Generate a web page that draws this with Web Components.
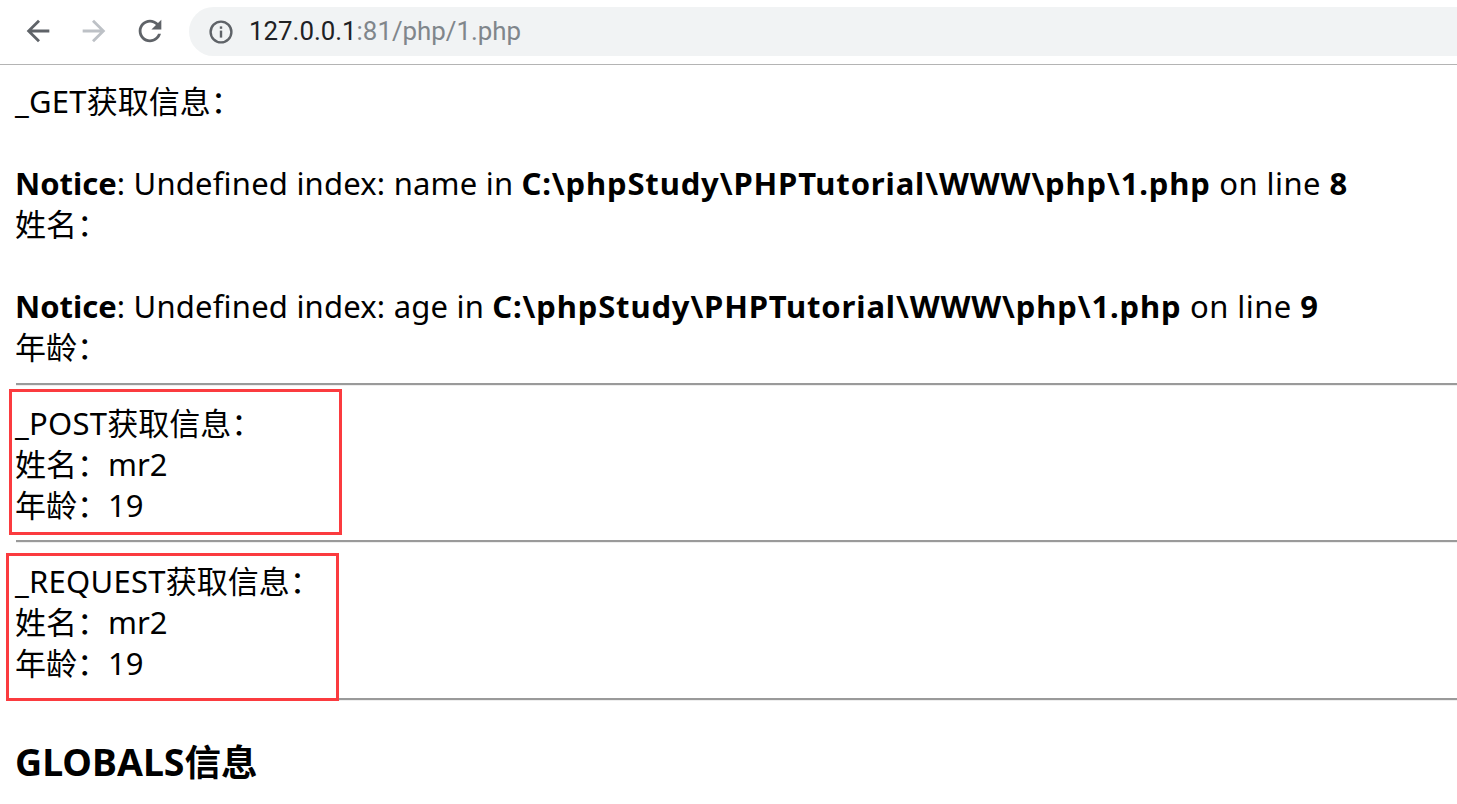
<!DOCTYPE html>
<html><head><meta charset="utf-8"><style>html,body{margin:0;padding:0;background:#fff;overflow:hidden}</style></head>
<body>
<browser-toolbar url-host="127.0.0.1" url-rest=":81/php/1.php"></browser-toolbar>
<php-page>
  <text-block><title-line name="_GET"></title-line></text-block>
  <text-block gap>
    <notice-line var="name" line="8"></notice-line>
    <span>姓名：</span>
  </text-block>
  <text-block gap>
    <notice-line var="age" line="9"></notice-line>
    <span>年龄：</span>
  </text-block>
  <page-rule first></page-rule>
  <text-block><title-line name="_POST"></title-line><span>姓名：mr2</span><span>年龄：19</span></text-block>
  <page-rule></page-rule>
  <text-block><title-line name="_REQUEST"></title-line><span>姓名：mr2</span><span>年龄：19</span></text-block>
  <page-rule></page-rule>
  <page-heading latin="GLOBALS" cjk="信息"></page-heading>
  <red-box style="left:9px;top:324px;width:333px;height:146px"></red-box>
  <red-box style="left:6px;top:488px;width:333px;height:148px"></red-box>
</php-page>
<script>
function def(name, html){
  customElements.define(name, class extends HTMLElement{
    connectedCallback(){
      if(this.shadowRoot) return;
      const r=this.attachShadow({mode:'open'});
      r.innerHTML=typeof html==='function'?html(this):html;
    }
  });
}
const ic=(d,c,s)=>`<svg width="${s}" height="${s}" viewBox="0 0 24 24"><path fill="${c}" d="${d}"/></svg>`;
def('browser-toolbar',el=>`<style>
:host{display:flex;align-items:center;height:64px;border-bottom:1px solid #b4b4b4;background:#fff;overflow:hidden}
.btns{display:flex;align-items:center;gap:22px;margin-left:21px;width:168px;flex:none;margin-bottom:2px}
svg{display:block;flex:none}
.pill{flex:1;margin-right:-40px;height:49px;margin-bottom:1px;background:#f1f3f4;border-radius:25px;display:flex;align-items:center;padding-left:20px;font:25.85px "Roboto","Noto Sans",sans-serif;color:#80868b}
.pill svg{margin-right:16px}
.pill span{position:relative;top:-1px}
b{font-weight:400;color:#202124}
</style>
<div class="btns">
${ic('M20 11H7.83l5.59-5.59L12 4l-8 8 8 8 1.41-1.41L7.83 13H20v-2z','#5f6368',34)}
${ic('M12 4l-1.41 1.41L16.17 11H4v2h12.17l-5.58 5.59L12 20l8-8z','#bdc1c6',34)}
${ic('M17.65 6.35C16.2 4.9 14.21 4 12 4c-4.42 0-7.99 3.58-7.99 8s3.57 8 7.99 8c3.73 0 6.84-2.55 7.73-6h-2.08c-.82 2.33-3.04 4-5.65 4-3.31 0-6-2.69-6-6s2.69-6 6-6c1.66 0 3.14.69 4.22 1.78L13 11h7V4l-2.35 2.35z','#5f6368',34)}
</div>
<div class="pill">
<svg width="24" height="24" viewBox="0 0 24 24"><circle cx="12" cy="12" r="10.4" fill="none" stroke="#5f6368" stroke-width="2.4"/><rect x="10.8" y="10.6" width="2.4" height="7" fill="#5f6368"/><rect x="10.8" y="6.4" width="2.4" height="2.4" fill="#5f6368"/></svg>
<span><b>${el.getAttribute('url-host')}</b>${el.getAttribute('url-rest')}</span>
</div>`);
def('php-page',`<style>
:host{display:block;position:relative;padding:16px 0 0 16px;font:31px/41px "Noto Sans","Noto Sans CJK SC",sans-serif;color:#000}
</style><slot></slot>`);
def('text-block',`<style>
:host{display:flex;flex-direction:column;align-items:flex-start;white-space:nowrap;margin-left:-1px}
:host([gap]){padding-top:41px}
::slotted(*){display:block}
</style><slot></slot>`);
def('title-line',el=>`<style>:host{display:block}span{letter-spacing:.25px}</style><span>${el.getAttribute('name')}</span>获取信息：`);
def('notice-line',el=>`<style>:host{display:block;letter-spacing:.2px}b{font-weight:700;letter-spacing:0}.p{letter-spacing:.85px}.e{letter-spacing:.45px}</style><div><b>Notice</b>: Undefined index: ${el.getAttribute('var')} in <b class="p">C:\\phpStudy\\PHPTutorial\\WWW\\php\\1.php</b><span class="e"> on line </span><b>${el.getAttribute('line')}</b></div>`);
def('page-rule',`<style>:host{display:block;box-sizing:border-box;height:3px;margin:14px 0 18px;border-top:2px solid #9a9a9a;border-bottom:1px solid #eee}:host([first]){margin:15px 0 17px}</style>`);
def('page-heading',el=>`<style>:host{display:block;font-size:36.5px;line-height:46px;font-weight:700;margin:38px 0 0 -1px}.l{font-size:37.5px}</style><span class="l">${el.getAttribute('latin')}</span>${el.getAttribute('cjk')}`);
def('red-box',`<style>:host{position:absolute;box-sizing:border-box;border:3px solid #fb3b3f;display:block;pointer-events:none}</style>`);
</script>
</body></html>
